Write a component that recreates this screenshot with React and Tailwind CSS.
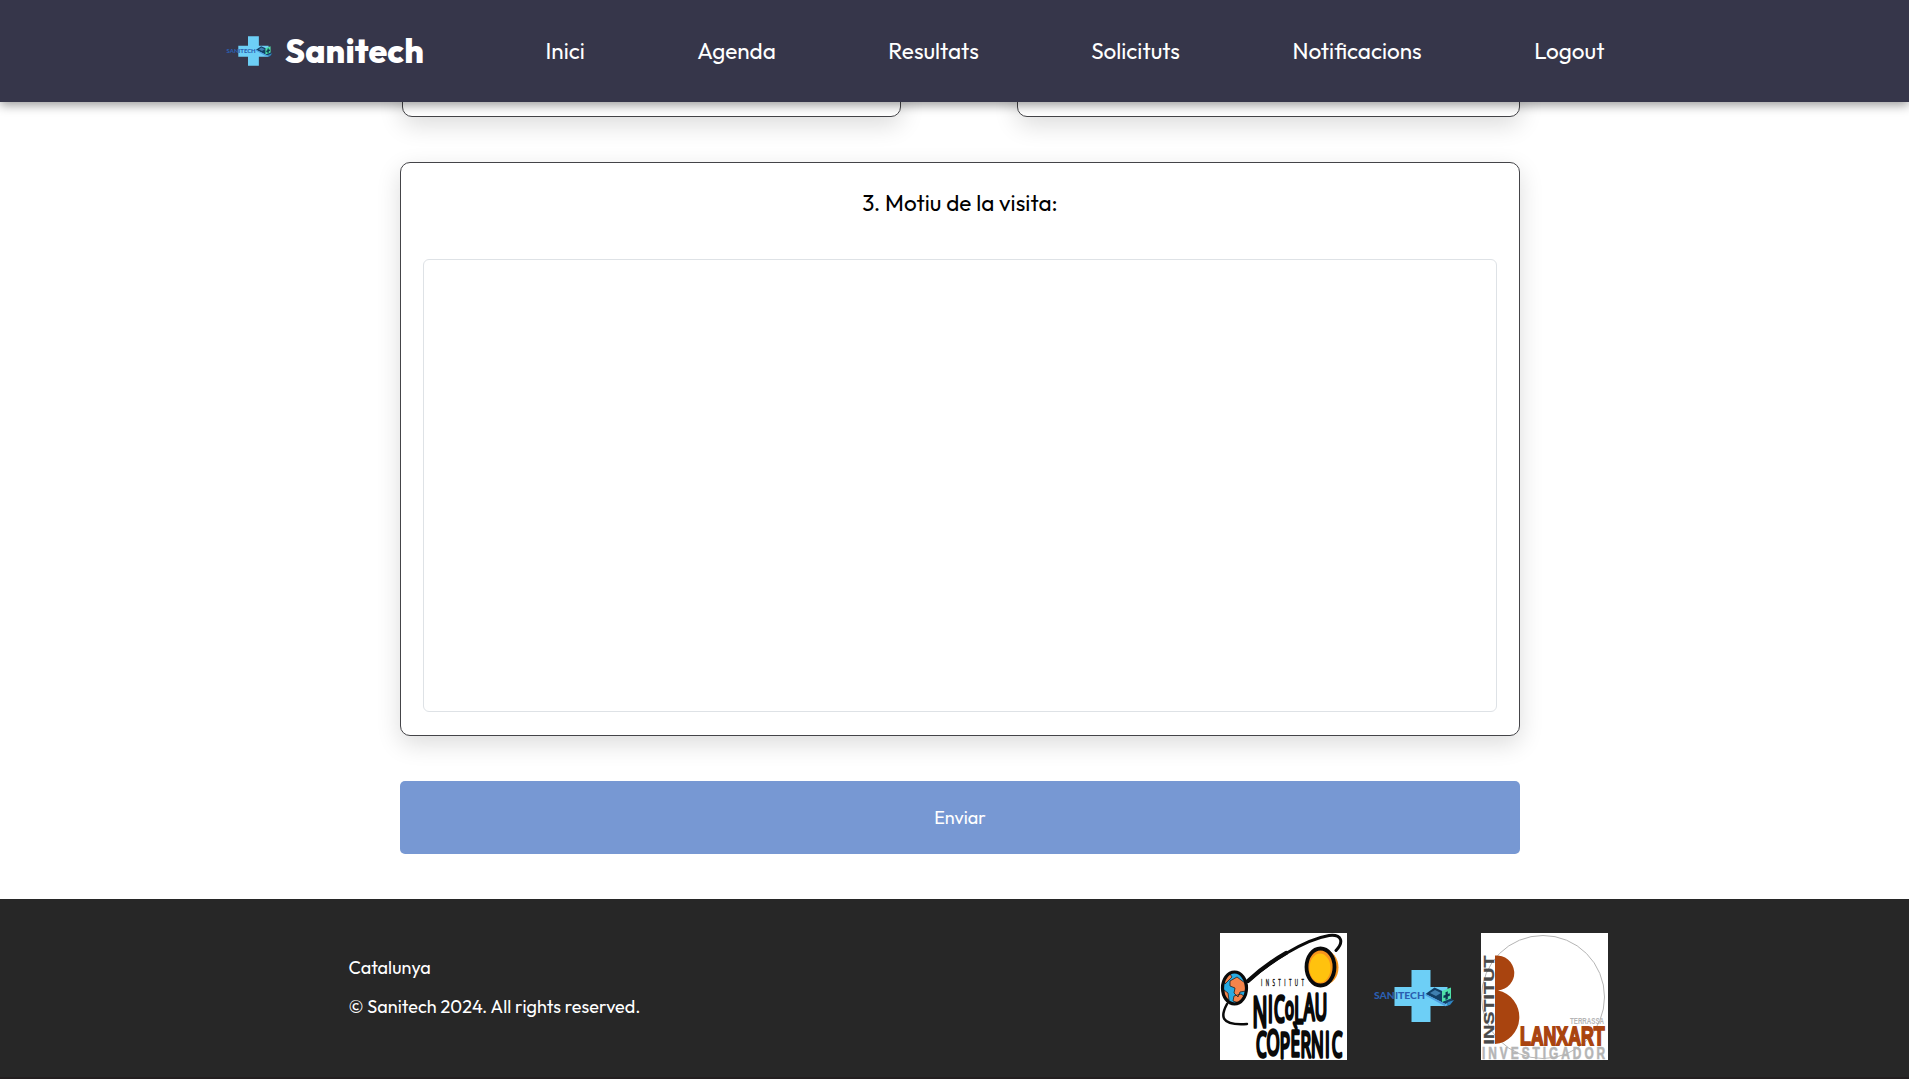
import React from "react";

function SanitechMark({ className }) {
  return (
    <svg viewBox="0 0 84 54" className={className}>
      <path d="M38.500 1h19v17h17v19h-17v16h-19V37h-17V18h17z" fill="#6dcff6" />
      <text x="1" y="30" fontSize="9.500" fontWeight="900" fontFamily="Lato, sans-serif" fill="#2b5fb0" textLength="51" lengthAdjust="spacingAndGlyphs">SANITECH</text>
      <path d="M52.500 25l9-6.500 12 5.500 6 7-7 4z" fill="#123f66" />
      <path d="M52.500 25l20 10v2.500l-20-11z" fill="#4f9fe0" />
      <path d="M57 24l5-3 6 3-5 3z" fill="#3f7fb0" />
      <path d="M75 33l6-2-4 5-4 1z" fill="#2f86c4" />
      <path d="M69 22l9-3.500v11L69 33z" fill="#4fe0a8" />
      <path d="M72.500 23.200l2.300-.9v2.700l2-.7v2.500l-2 .7v2.500l-2.300.9v-2.500l-2 .7v-2.500l2-.7z" fill="#0d3550" />
    </svg>
  );
}

function CopernicLogo() {
  return (
    <svg viewBox="0 0 127 127" className="size-[127px] bg-white">
      <g fill="none" stroke="#0a0a0a" strokeLinecap="round">
        <path d="M28 48C48 31 82 7 109 2.500c13-1.500 15 6.500 7 15" strokeWidth="3" />
        <path d="M28 48C40 37 52 28 66 20" strokeWidth="4.200" />
        <path d="M7 71C1 82-1 93 27 91" strokeWidth="2.500" />
      </g>
      <ellipse cx="104.500" cy="34.500" rx="14" ry="17.500" fill="#f7941d" />
      <ellipse cx="100.500" cy="34" rx="14" ry="18.500" fill="#f7941d" stroke="#0a0a0a" strokeWidth="3.800" />
      <ellipse cx="100" cy="35" rx="10.500" ry="14.500" fill="#ffc20e" />
      <ellipse cx="14.500" cy="55" rx="12" ry="16" fill="#29abe2" />
      <path d="M10 48l7-4 8 6 1 8-6 1-2 5-4-4 1-5-5-2zM4 46l6-5 2 3-7 7zM14 63l7-2 4 3-6 6-6-2zM4 57l4 3 1 7-5-3z" fill="#f5844b" stroke="#222" strokeWidth=".8" />
      <ellipse cx="14.500" cy="55" rx="12" ry="16" fill="none" stroke="#0a0a0a" strokeWidth="3.200" />
      <g fontFamily='"Open Sans", sans-serif' fill="#0a0a0a" stroke="#0a0a0a" strokeLinejoin="round" strokeLinecap="round">
        <text transform="translate(41 52.500) scale(.5 1)" fontSize="9" strokeWidth=".4" textLength="86">INSTITUT</text>
        <g strokeWidth="3.200">
          <text transform="translate(32.500 89) scale(.55 1.150)" fontSize="31" x="0 28 39 59 76 93 113" y="4 0 0 -3 1 -2 -2">
            <tspan fontSize="36">N</tspan>
            IC
            <tspan fontSize="27">o</tspan>
            LAU
          </text>
          <text transform="translate(36 124) scale(.53 1.080)" fontSize="32" x="0 20 45 65 84 104 130 143" y="0 -2 1 -1 0 0 0 0">COPÈRNIC</text>
        </g>
      </g>
    </svg>
  );
}

function BlanxartLogo() {
  const block = '"Liberation Sans", Arial, sans-serif';
  return (
    <svg viewBox="0 0 127 127" className="size-[127px] bg-white">
      <circle cx="62" cy="64" r="61.500" fill="none" stroke="#b5b5b5" strokeWidth="1" />
      <text transform="translate(12.500 111.500) rotate(-90)" fontFamily={block} fontWeight="700" fontSize="15.500" fill="#4a4a4a" stroke="#4a4a4a" strokeWidth=".3" textLength="89" lengthAdjust="spacingAndGlyphs">INSTITUT</text>
      <path d="M14 22.500a17.700 17.500 0 0 1 3 35a26 27 0 0 1-3 53.500z" fill="#a9440f" />
      <g fontFamily={block} fontWeight="700">
        <text x="89" y="90.500" fontSize="8.500" fill="#b5b5b5" textLength="34" lengthAdjust="spacingAndGlyphs">TERRASSA</text>
        <text x="39" y="111.500" fontSize="26" fill="#a9440f" stroke="#a9440f" strokeWidth="1.800" textLength="84.500" lengthAdjust="spacingAndGlyphs">LANXART</text>
        <text transform="translate(1 125.500) scale(.7 1)" fontSize="17" fill="#b5b5b5" stroke="#b5b5b5" strokeWidth=".6" textLength="176">INVESTIGADOR</text>
      </g>
    </svg>
  );
}

const card = "rounded-[10px] border border-[#444448] bg-white shadow-[0_8px_24px_rgba(0,0,0,0.14)]";

export default function App() {
  return (
    <div className="flex h-[1079px] flex-col overflow-hidden bg-white font-[Outfit,Lato,sans-serif] text-white">
      <header className="z-10 flex h-[102px] shrink-0 items-center bg-[#36364a] pl-[226px] shadow-[0_3px_10px_rgba(0,0,0,0.4)]">
        <SanitechMark className="h-[32px] w-[48px]" />
        <span className="ml-[11px] w-[139px] whitespace-nowrap text-[33.75px] leading-none font-extrabold tracking-[0.1px]">Sanitech</span>
        <nav className="ml-[121.5px] flex gap-[112.5px] text-[22.5px] leading-none whitespace-nowrap">
          <a>Inici</a>
          <a>Agenda</a>
          <a>Resultats</a>
          <a>Solicituts</a>
          <a>Notificacions</a>
          <a>Logout</a>
        </nav>
      </header>

      <main className="ml-[400px] flex w-[1120px] shrink-0 flex-col">
        <div className="-mt-[24px] ml-[2px] flex h-[39px] justify-between">
          <div className={`w-[499px] ${card}`} />
          <div className={`w-[503px] ${card}`} />
        </div>
        <section className={`mt-[45px] flex h-[574px] flex-col items-center px-[22px] pt-[26px] ${card}`}>
          <h2 className="h-[70px] text-[22.5px] tracking-[0.04px] leading-[28px] text-black whitespace-nowrap">3. Motiu de la visita:</h2>
          <textarea aria-label="Motiu de la visita" className="h-[453px] w-[1074px] shrink-0 resize-none rounded-[6px] border border-[#dee2e6] bg-white" />
        </section>
        <button className="mt-[45px] h-[73px] rounded-[5px] bg-[#7798d3] text-[18px]">Enviar</button>
      </main>

      <footer className="mt-[45px] flex grow items-start border-b-2 border-[#231f20] bg-[#272727] pt-[34px] pl-[348.5px]">
        <div className="mt-[20px] w-[871.5px] text-[18px] tracking-[0.06px] leading-[29px] whitespace-nowrap">
          <p>Catalunya</p>
          <p className="mt-[10px]">© Sanitech 2024. All rights reserved.</p>
        </div>
        <CopernicLogo />
        <SanitechMark className="mt-[36px] ml-[26px] h-[54px] w-[84px]" />
        <div className="ml-[24px]">
          <BlanxartLogo />
        </div>
      </footer>
    </div>
  );
}
